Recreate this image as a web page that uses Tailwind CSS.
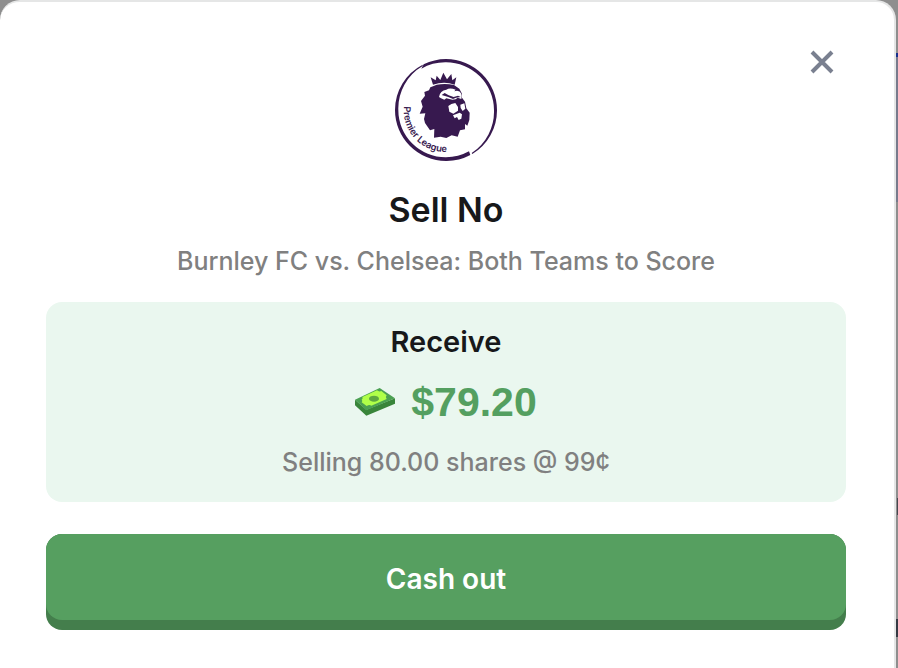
<!DOCTYPE html>
<html lang="en">
<head>
  <meta charset="UTF-8" />
  <meta name="viewport" content="width=device-width, initial-scale=1.0" />
  <title>Sell No</title>
  <script src="https://cdn.jsdelivr.net/npm/@tailwindcss/browser@4"></script>
</head>
<body class="relative min-h-screen overflow-hidden bg-[#8e8e8e] font-['Inter',sans-serif] font-medium">

  <!-- Page edge behind the dialog -->
  <div class="absolute inset-y-0 right-0 w-[2px]">
    <div class="absolute top-[53px] h-1 w-full bg-[#17308f]"></div>
    <div class="absolute top-[57px] h-[145px] w-full bg-[#777a8c]"></div>
    <div class="absolute top-[498px] right-0 h-[17px] w-px bg-[#46474f]"></div>
    <div class="absolute top-[619px] h-[18px] w-full bg-[#353a44]"></div>
  </div>

  <!-- Dialog -->
  <main class="relative mr-[2px] flex min-h-screen flex-col items-center rounded-t-[20px] border-t-2 border-r-2 border-[#e5e6e6] bg-white pt-[57px] pr-12 pb-[38px] pl-[46px] text-center">
    <button type="button" aria-label="Close" class="absolute top-10 right-[52px] p-2 text-[#7a8090]">
      <svg class="size-6" viewBox="0 0 24 24" fill="none" stroke="currentColor" stroke-width="4"><path d="M2 2l20 20M22 2L2 22" /></svg>
    </button>

    <!-- League crest -->
    <svg class="size-[102px]" viewBox="30 27 306 306" fill="#37194f" role="img" aria-label="Premier League">
      <path d="M113 44A153 153 0 0 0 30 180A153 153 0 0 0 183 333A153 153 0 0 0 256 315L252 304A143 143 0 0 1 183 322A142 142 0 0 1 40 180A147 147 0 0 1 113 48Z" />
      <path d="M109 56L116 43A153 153 0 0 1 183 27A153 153 0 0 1 336 180A153 153 0 0 1 262 312L260 309A148 148 0 0 0 327 180A144 144 0 0 0 183 37A145 145 0 0 0 109 56Z" />
      <path d="M144 104L137 82L152 91L155 77L166 90L175 68L186 88L199 72L202 91L214 82L209 104Q178 93 144 104Z" />
      <path d="M136 112Q147 108 155 104Q182 99 207 105L223 116L231 131L231 143L240 155L244 175L254 188L253 210L247 227L240 222L240 238L225 241L218 260L200 256L184 264L167 260L147 263L148 237L135 241L120 219L117 207L121 190L104 191L113 170L108 153L120 137L118 126L132 121Z" />
      <path fill="#fff" d="M162 141Q165 121 184 119Q194 112 212 119L208 124Q223 119 229 131Q232 139 229 147L218 143L212 148L202 149L184 145L178 149L168 145Z" />
      <path d="M170 135L179 129L191 136L206 141L219 137L227 141L213 143L204 147L190 141L180 138Z" />
      <path fill="#fff" d="M190 168Q198 160 211 159L219 171L219 182L205 191L193 185ZM226 164L238 160L241 176L233 183L227 174ZM204 196L224 188L231 193L229 206L221 210L216 201L209 205Z" />
      <path id="crest-text" fill="none" d="M57 169A126 124 0 0 0 210 303" />
      <text class="text-[28px] font-semibold"><textPath href="#crest-text">Premier League</textPath></text>
    </svg>

    <h1 class="mt-7 text-[34px] leading-[42px] font-semibold text-[#17181a]">Sell No</h1>
    <p class="mt-3 text-[25px] leading-9 text-[#808080]">Burnley FC vs. Chelsea: Both Teams to Score</p>

    <section class="mt-[23px] flex w-full flex-col items-center rounded-2xl bg-[#eaf7ef] pt-5 pb-[22px]">
      <h2 class="text-[29px] leading-10 font-semibold text-[#17181a]">Receive</h2>
      <div class="mt-4 flex items-center gap-4 text-[#549f60]">
        <svg class="h-7 w-10" viewBox="0 0 120 84" aria-hidden="true">
          <path fill="#39853a" d="M0 35L34 65L120 31V47L34 83L0 52Z" />
          <path fill="#4ba052" d="M0 35L74 0L120 31L34 67Z" />
          <path fill="#b0ff49" d="M20 35Q25 30 22 27L66 7Q72 12 79 9L95 22Q90 27 95 33L49 53Q43 49 35 54L20 43Q24 39 20 35Z" />
          <ellipse cx="57" cy="32" rx="15" ry="9" fill="#5da840" />
        </svg>
        <strong class="font-['Liberation_Sans',sans-serif] text-[41px] leading-12 font-bold">$79.20</strong>
      </div>
      <p class="mt-[18px] text-[25px] leading-9 text-[#808080]">Selling 80.00 shares @ 99¢</p>
    </section>

    <button type="button" class="mt-8 w-full rounded-2xl bg-[#447e4c] pb-[10px] text-[28px] text-white">
      <span class="block rounded-2xl bg-[#569f60] pt-6 pb-5 leading-[42px] font-semibold">Cash out</span>
    </button>
  </main>
</body>
</html>
